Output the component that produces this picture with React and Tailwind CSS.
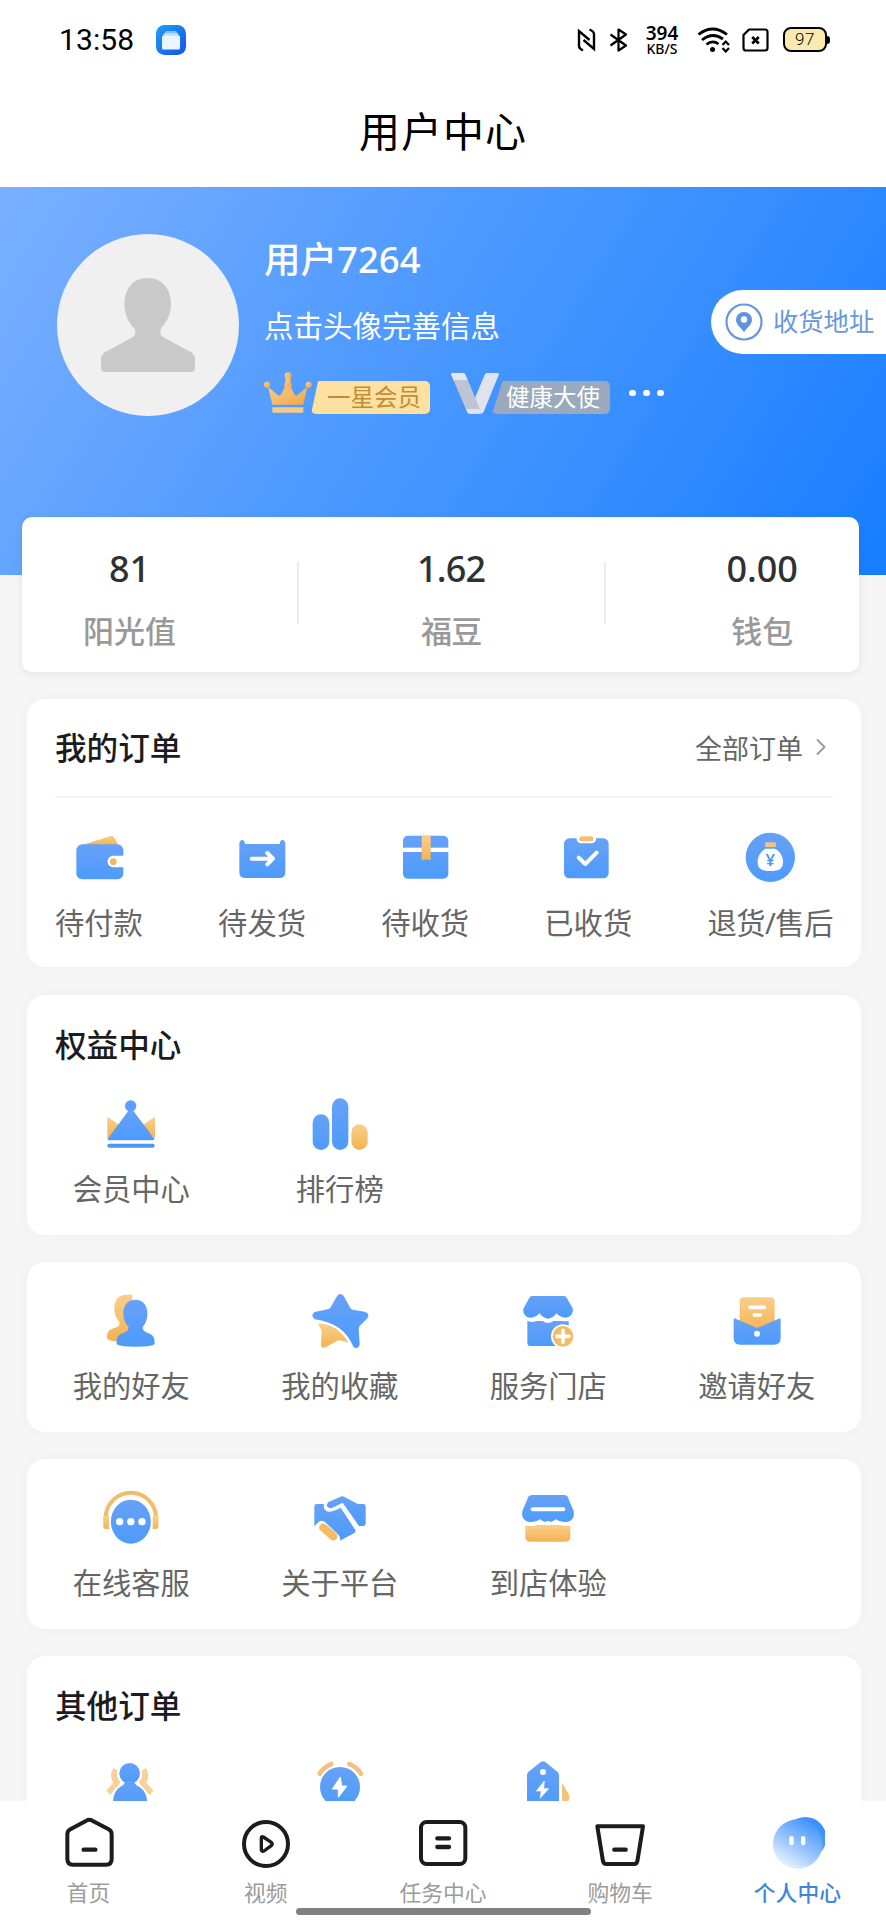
import React from 'react';
import { ChevronRight } from 'lucide-react';

const BLUE = 'url(#blue)';
const ORANGE = 'url(#orange)';

// Shared gradients for all the menu icons
const IconDefs = () => (
  <svg className="absolute w-0 h-0">
    <defs>
      <linearGradient id="blue" x1="0" y1="0" x2="0" y2="1">
        <stop offset="0" stopColor="#66a1f8" />
        <stop offset="1" stopColor="#4d9bfb" />
      </linearGradient>
      <linearGradient id="orange" x1="0" y1="0" x2="0" y2="1">
        <stop offset="0" stopColor="#f9cf8a" />
        <stop offset="1" stopColor="#f5b252" />
      </linearGradient>
      <linearGradient id="crown" x1="0" y1="0" x2="1" y2="1">
        <stop offset="0" stopColor="#fbd08a" />
        <stop offset="1" stopColor="#f3a648" />
      </linearGradient>
      <linearGradient id="appicon" x1="0" y1="0" x2="1" y2="1">
        <stop offset="0" stopColor="#1ea0f4" />
        <stop offset="1" stopColor="#1353e8" />
      </linearGradient>
      <linearGradient id="faceBack" x1="0" y1="1" x2="1" y2="0">
        <stop offset="0" stopColor="#9cc6ff" />
        <stop offset="1" stopColor="#2282fa" />
      </linearGradient>
      <linearGradient id="faceFront" x1="0.2" y1="1" x2="0.75" y2="0.1">
        <stop offset="0" stopColor="#f4f9ff" />
        <stop offset="0.45" stopColor="#a3cbff" />
        <stop offset="1" stopColor="#4a99fc" />
      </linearGradient>
    </defs>
  </svg>
);

const MenuIcon = ({ children }) => (
  <svg className="w-16 h-16" viewBox="0 0 192 192" fill="none">
    {children}
  </svg>
);

const icons = {
  wallet: (
    <MenuIcon>
      <path d="M46 57 L131 30 Q137 28 140 33 L154 57Z" fill={ORANGE} />
      <rect x="28" y="55" width="141" height="105" rx="18" fill={BLUE} />
      <path d="M176 89H139a17.500 17.500 0 0 0 0 35H176Z" fill="#fff" />
      <circle cx="139" cy="107" r="10" fill="#f0b766" />
    </MenuIcon>
  ),
  ship: (
    <MenuIcon>
      <path d="M28 54Q28 43 37 42Q44 43 45 54H149Q150 43 157 42Q166 43 166 54V138Q166 156 148 156H46Q28 156 28 138Z" fill={BLUE} />
      <path d="M65 98H128M112 81L129 98L112 115" stroke="#fff" strokeWidth="12" strokeLinecap="round" strokeLinejoin="round" />
    </MenuIcon>
  ),
  parcel: (
    <MenuIcon>
      <rect x="30" y="29" width="136" height="129" rx="15" fill={BLUE} />
      <rect x="28" y="65" width="140" height="13" fill="#fff" />
      <path d="M86 29H113V103L99.500 100L86 103Z" fill={ORANGE} />
    </MenuIcon>
  ),
  received: (
    <MenuIcon>
      <rect x="24" y="37" width="134" height="120" rx="16" fill={BLUE} />
      <path d="M62 34H120V40Q118 52 106 52H76Q64 52 62 40Z" fill="#fff" />
      <rect x="70" y="31" width="42" height="15" rx="6" fill="#f2c071" />
      <path d="M68 95L88 114L122 80" stroke="#fff" strokeWidth="12" strokeLinecap="round" strokeLinejoin="round" />
    </MenuIcon>
  ),
  refund: (
    <MenuIcon>
      <circle cx="97" cy="94" r="74" fill={BLUE} />
      <rect x="81" y="49" width="33" height="14" rx="4" fill="#f0c287" />
      <path d="M83 68H111C127 76 135 92 135 107C135 127 124 135 97 135C70 135 59 127 59 107C59 92 67 76 83 68Z" fill="#fff" />
      <text x="97" y="121" textAnchor="middle" fontSize="50" fontWeight="600" fill="#4d97f7">¥</text>
    </MenuIcon>
  ),
  crown: (
    <MenuIcon>
      <path d="M25 74L62 100L25 140ZM168 74L130 100L168 140Z" fill={ORANGE} />
      <circle cx="95" cy="42" r="17" fill="#5c9ff8" />
      <path d="M90 54H101L166 140Q166 145 160 145H30Q25 145 26 140Z" fill={BLUE} />
      <rect x="25" y="155" width="142" height="12" rx="6" fill="#4d97f3" />
    </MenuIcon>
  ),
  rank: (
    <MenuIcon>
      <rect x="14" y="67" width="50" height="107" rx="25" fill={BLUE} />
      <rect x="72" y="19" width="49" height="155" rx="24.500" fill={BLUE} />
      <rect x="130" y="97" width="49" height="77" rx="24.500" fill={ORANGE} />
    </MenuIcon>
  ),
  friends: (
    <MenuIcon>
      <path d="M81 17C59 17 46 33 46 57C46 78 53 90 61 99C64 109 58 114 46 117C30 121 24 128 24 148Q26 157 60 157H100V17Z" fill={ORANGE} />
      <path d="M109 32C87 32 73 48 73 72C73 92 79 103 88 112C90 122 86 127 75 131C58 136 52 142 53 165Q58 173 110 173Q162 173 167 165C168 142 160 136 145 131C133 127 130 122 132 112C140 103 145 92 145 72C145 48 131 32 109 32Z" fill={BLUE} />
    </MenuIcon>
  ),
  star: (
    <MenuIcon>
      <path d="M97 15Q104 15 109 24L127 57Q129 61 134 62L170 68Q187 73 178 88L155 111Q152 115 152 120L155 165Q152 182 137 175Q108 102 20 91Q6 79 20 69L59 61Q65 60 67 56L86 23Q90 15 97 15Z" fill={BLUE} />
      <path d="M30 103Q91 106 121 162Q96 151 88 155L54 174Q38 181 39 164L41 127Q41 121 36 116Z" fill={ORANGE} />
    </MenuIcon>
  ),
  store: (
    <MenuIcon>
      <path d="M34 96H158V171H44Q34 171 34 161Z" fill={BLUE} />
      <path d="M30 84V94Q46 102 60 97Q66 94 72 88Q80 101 96 102Q112 101 121 88Q129 101 162 95V84Z" fill="#fff" />
      <path d="M48 21H144Q149 21 152 26L170 58Q173 67 165 79Q155 89 140 85Q130 83 121 73Q112 88 96 89Q80 88 71 73Q62 83 52 85Q34 89 26 77Q19 67 23 58L40 26Q43 21 48 21Z" fill={BLUE} />
      <circle cx="141" cy="142" r="36" fill="#fff" />
      <circle cx="141" cy="142" r="31" fill="#f1bb67" />
      <path d="M141 124V160M123 142H159" stroke="#fff" strokeWidth="11" strokeLinecap="round" />
    </MenuIcon>
  ),
  invite: (
    <MenuIcon>
      <rect x="44" y="25" width="105" height="105" rx="12" fill={ORANGE} />
      <path d="M75 55H118M88 78H106" stroke="#fff" strokeWidth="11" strokeLinecap="round" />
      <path d="M26 92Q26 86 32 89L90 115Q96 118 102 115L161 89Q167 86 167 92V147Q167 167 147 167H46Q26 167 26 147Z" fill={BLUE} />
      <circle cx="96" cy="134" r="9" fill="#fff" />
    </MenuIcon>
  ),
  service: (
    <MenuIcon>
      <path d="M20 105V96A75 75 0 0 1 171 96V105" stroke="#efbd6c" strokeWidth="12" />
      <path d="M12 90H30V129H20Q12 129 13 121ZM179 90H161V129H171Q179 129 178 121Z" fill={ORANGE} />
      <ellipse cx="95.500" cy="107" rx="64" ry="71" fill="#fff" />
      <ellipse cx="95.500" cy="107" rx="60" ry="66" fill={BLUE} />
      <circle cx="62" cy="107" r="11" fill="#fff" />
      <circle cx="95.500" cy="107" r="11" fill="#fff" />
      <circle cx="129" cy="107" r="11" fill="#fff" />
    </MenuIcon>
  ),
  handshake: (
    <MenuIcon>
      <path d="M60 49L96 33Q103 29 110 33L145 52Q149 54 153 54H166Q173 54 173 61V113Q173 120 166 120H153L104 50L72 66Q58 68 56 57Z" fill={BLUE} />
      <path d="M19 61Q19 54 26 54H48Q44 72 61 77Q74 78 98 65L142 132Q144 138 139 141L96 164Q99 151 88 143L54 111Q41 99 31 109L19 121Z" fill={BLUE} />
      <path d="M46 125L76 151" stroke="#f5ba65" strokeWidth="25" strokeLinecap="round" />
    </MenuIcon>
  ),
  shop: (
    <MenuIcon>
      <path d="M28 117H163V153Q163 167 149 167H42Q28 167 28 153Z" fill={ORANGE} />
      <path d="M28 112V119Q44 121 58 119Q68 116 74 111Q84 121 96 115Q108 121 119 111Q130 121 163 119V112Z" fill="#fff" />
      <path d="M48 27H146Q152 27 155 32L172 73Q176 85 172 94Q166 108 148 108Q131 109 119 100Q108 112 96 104Q84 112 73 100Q60 109 44 108Q26 108 20 94Q16 85 20 73L37 32Q41 27 48 27Z" fill={BLUE} />
      <path d="M50 70H142" stroke="#fff" strokeWidth="12" strokeLinecap="round" />
    </MenuIcon>
  ),
  group: (
    <MenuIcon>
      <path d="M51 50Q38 70 54 87Q46 102 28 119M133 50Q146 70 130 87Q138 102 158 119" stroke="#f8d09a" strokeWidth="18" />
      <circle cx="92" cy="61" r="37" fill="#fff" />
      <path d="M34 150Q36 94 92 88Q148 94 152 150Z" fill="#fff" />
      <circle cx="92" cy="61" r="31" fill={BLUE} />
      <path d="M78 84H106Q106 94 118 100Q144 114 145 150V170H42V150Q42 114 66 100Q78 94 78 84Z" fill={BLUE} />
    </MenuIcon>
  ),
  flash: (
    <MenuIcon>
      <path d="M35 62Q48 42 70 33M159 62Q146 42 124 33" stroke="#f2c27c" strokeWidth="14" strokeLinecap="round" />
      <circle cx="96" cy="102" r="66" fill="#fff" />
      <circle cx="96" cy="102" r="60" fill={BLUE} />
      <path d="M46 150L58 134H134L148 150Z" fill="#4d9bfb" />
      <path d="M97 72L73 108H91V133L117 99H101Z" fill="#fff" stroke="#fff" strokeWidth="3" strokeLinejoin="round" />
    </MenuIcon>
  ),
  tag: (
    <MenuIcon>
      <path d="M138 90L158 122Q164 136 155 147V170H138Z" fill="#f4c27a" />
      <path d="M33 66Q33 60 38 56L74 27Q81 22 88 27L124 56Q129 60 129 66V170H33Z" fill={BLUE} />
      <circle cx="81" cy="57" r="9" fill="#fff" />
      <path d="M85 84L61 114H76L72 136L98 107H83Z" fill="#fff" stroke="#fff" strokeWidth="2" strokeLinejoin="round" />
    </MenuIcon>
  ),
};

const NavIcon = ({ children }) => (
  <svg
    className="w-14 h-14"
    viewBox="0 0 168 168"
    fill="none"
    stroke="#1c1c1c"
    strokeWidth="12"
    strokeLinecap="round"
    strokeLinejoin="round"
  >
    {children}
  </svg>
);

const tabs = [
  {
    label: '首页',
    icon: (
      <NavIcon>
        <path d="M76 17Q85 11 94 17L143 43Q152 48 152 58V132Q152 149 135 149H36Q19 149 19 132V58Q19 48 28 43Z" />
        <path d="M68 104H103" strokeWidth="13" />
      </NavIcon>
    ),
  },
  {
    label: '视频',
    icon: (
      <NavIcon>
        <circle cx="84" cy="87" r="66" />
        <path d="M70 69Q70 63 76 66L100 82Q105 87 100 92L78 108Q71 111 70 105Z" strokeWidth="10" />
      </NavIcon>
    ),
  },
  {
    label: '任务中心',
    icon: (
      <NavIcon>
        <rect x="18" y="21" width="133" height="126" rx="17" />
        <path d="M67 70H102M67 96H102" strokeWidth="13" />
      </NavIcon>
    ),
  },
  {
    label: '购物车',
    icon: (
      <NavIcon>
        <path d="M16 34H153L136 139Q134 147 127 147H43Q35 147 33 139Z" />
        <path d="M67 104H101" strokeWidth="13" />
      </NavIcon>
    ),
  },
  {
    label: '个人中心',
    active: true,
    icon: (
      <svg className="w-14 h-14" viewBox="0 0 168 168">
        <circle cx="109" cy="69" r="63" fill="url(#faceBack)" />
        <circle cx="86" cy="87" r="74" fill="url(#faceFront)" />
        <rect x="61" y="63" width="13" height="28" rx="6" fill="#fff" />
        <rect x="96" y="63" width="13" height="28" rx="6" fill="#fff" />
      </svg>
    ),
  },
];

const orderItems = [
  { label: '待付款', icon: icons.wallet },
  { label: '待发货', icon: icons.ship },
  { label: '待收货', icon: icons.parcel },
  { label: '已收货', icon: icons.received },
  { label: '退货/售后', icon: icons.refund, labelClass: 'tracking-[-0.5px]' },
];

const StatusBar = () => (
  <div className="h-[79px] pl-[59px] pr-14 flex items-center justify-between text-black">
    <div className="flex items-center gap-[22px]">
      <span className="font-['Roboto',sans-serif] text-[30px] leading-none tracking-[0.1px]">13:58</span>
      <svg className="w-[30px] h-[30px]" viewBox="0 0 30 30">
        <rect width="30" height="30" rx="8.500" fill="url(#appicon)" />
        <rect x="9" y="6" width="12" height="3" rx="1.500" fill="#7fc0fa" />
        <rect x="7.500" y="8" width="15" height="4" rx="1.500" fill="#b8dcfd" />
        <rect x="6" y="10.500" width="18" height="14" rx="1.500" fill="#eaf5ff" />
      </svg>
    </div>
    <div className="flex items-center">
      <svg className="w-[19px] h-6" viewBox="0 0 19 24" fill="none" stroke="#000" strokeWidth="2.400">
        <path d="M6 22.500Q2 20.500 2 18V3L12.500 12M12.500 1.500Q17 3.500 17 6V21L6.500 12" />
      </svg>
      <svg className="w-[19px] h-6 ml-[13.500px]" viewBox="0 0 19 24" fill="none" stroke="#000" strokeWidth="2.200">
        <path d="M1.500 6.500L17 17.500L9.500 22.500V1.500L17 6.500L1.500 17.500" strokeLinejoin="round" />
      </svg>
      <div className="ml-4 w-9 flex flex-col items-center font-['Noto_Sans',sans-serif]">
        <span className="text-[19px] leading-[18px] font-semibold">394</span>
        <span className="text-[14px] leading-[14px] font-medium">KB/S</span>
      </div>
      <svg className="w-[33px] h-[26px] ml-[17px]" viewBox="0 0 33 26" fill="none" stroke="#000" strokeWidth="2.800">
        <path d="M1.500 7.500Q15.500 -3.500 30 7.500M5 13Q15.500 4.500 26 12M9.500 17.500Q15.500 12.500 21.500 17" />
        <circle cx="15.500" cy="22.500" r="2.500" fill="#000" stroke="none" />
        <path d="M25.500 18L28.700 14.500L32 18M25.500 21L28.700 24.500L32 21" strokeWidth="2.200" />
      </svg>
      <svg className="w-[27px] h-6 ml-3" viewBox="0 0 27 24" fill="none" stroke="#000" strokeWidth="2.200">
        <path d="M7 1.500H23Q25.500 1.500 25.500 4V20Q25.500 22.500 23 22.500H4Q1.500 22.500 1.500 20V7Z" strokeLinejoin="round" />
        <path d="M10.200 9L16.800 15.500M16.800 9L10.200 15.500" strokeWidth="2.600" />
      </svg>
      <div className="ml-3.5 flex items-center">
        <div className="w-11 h-[25px] rounded-[8px] border-2 border-black bg-[#fbeab0] flex items-center justify-center font-['Roboto',sans-serif] font-light text-[17px] leading-none tracking-[0.5px]">
          97
        </div>
        <div className="w-[3px] h-2 rounded-r bg-black" />
      </div>
    </div>
  </div>
);

const ProfileHeader = () => (
  <div className="h-[388px] pt-[47px] pl-[57px] flex bg-[linear-gradient(122deg,#7ab0ff_0%,#4f9aff_42%,#3a90ff_65%,#177dff_100%)]">
    <div className="w-[182px] h-[182px] shrink-0 rounded-full bg-[#f0f0f0]">
      <svg className="w-full h-full" viewBox="0 0 182 182">
        <path
          d="M90.500 44C76 44 67.500 55 67.500 70C67.500 80 71 88 77 94C79 98 79 101 76 103L52 116Q44 119 44 125V134Q44 138 48 138H134Q138 138 138 134V125Q138 119 130 116L106 103Q102 101 104 94C110 88 114 80 114 70C114 55 105 44 90.500 44Z"
          fill="#c9c9c9"
        />
      </svg>
    </div>
    <div className="ml-[25px] flex-1 text-white">
      <h2 className="mt-[5px] text-[36.500px] leading-[40px] font-medium">用户7264</h2>
      <p className="mt-[31px] text-[29.500px] leading-[32px]">点击头像完善信息</p>
      <div className="mt-[28px] h-11 flex items-end">
        <svg className="w-12 h-[42px]" viewBox="0 0 144 126" fill="url(#crown)">
          <path d="M72 30L92 68Q96 72 100 70L130 44L118 98H25L12 44L42 70Q47 72 51 67Z" />
          <circle cx="72" cy="11" r="10" />
          <path d="M66 16H78L84 46H60Z" />
          <circle cx="9" cy="38" r="9" />
          <circle cx="134" cy="38" r="9" />
          <path d="M25 106H118V119Q118 122 114 122H29Q25 122 25 119Z" fill="#f6cb86" />
        </svg>
        <div className="-ml-px h-[33px] w-[119px] pl-4 text-[23.500px] leading-[33px] text-[#c08c3c] rounded-[5px] bg-[#fde1a0] [clip-path:polygon(6%_0,100%_0,100%_100%,0_100%)]">
          一星会员
        </div>
        <svg className="w-12 h-[41px] ml-[21px]" viewBox="0 0 144 123">
          <path d="M3 0H36Q41 0 43 5L66 60L54 122Q50 120 48 115L1 5Q0 1 3 0Z" fill="#c5cbdc" />
          <path d="M3 0H36Q41 0 43 5L50 22H8L1 5Q0 1 3 0Z" fill="#e4e7f2" />
          <path d="M108 0H140Q145 1 143 6L98 116Q95 122 90 122H56Q51 121 49 117L72 75L101 5Q103 0 108 0Z" fill="#dfe2ef" />
          <path d="M50 22L74 78L92 120Q91 122 88 122H56Q50 121 48 115L8 22Z" fill="#bcc4d6" />
          <path d="M46 108H95L91 118Q89 122 86 122H56Q50 121 48 115Z" fill="#dfe2ef" />
        </svg>
        <div className="-ml-[7px] h-[33px] w-[118px] pl-3.5 text-[23.500px] leading-[33px] rounded-[5px] bg-[#9aa9bd] [clip-path:polygon(9%_0,100%_0,100%_100%,0_100%)]">
          健康大使
        </div>
        <div className="ml-[19px] mb-[18px] flex gap-[7px]">
          <span className="w-[7px] h-[6px] rounded-full bg-white" />
          <span className="w-[7px] h-[6px] rounded-full bg-white" />
          <span className="w-[7px] h-[6px] rounded-full bg-white" />
        </div>
      </div>
    </div>
    {/* Address button stuck to the right edge */}
    <div className="mt-14 w-[175px] h-16 shrink-0 pl-3.5 flex items-center rounded-l-full bg-white text-[#6797dc]">
      <svg className="w-[38px] h-[38px]" viewBox="0 0 38 38" fill="none">
        <circle cx="19" cy="19" r="17.500" stroke="#6797dc" strokeWidth="2.200" />
        <path d="M19 29C15 24 11 21 11 17A8 8 0 0 1 27 17C27 21 23 24 19 29Z" fill="#5f93dd" />
        <circle cx="19" cy="16.500" r="3.200" fill="#fff" />
      </svg>
      <span className="ml-2.5 text-[25.300px] leading-none whitespace-nowrap">收货地址</span>
    </div>
  </div>
);

const Stat = ({ value, label, className = '' }) => (
  <div className={`flex flex-col items-center font-medium ${className}`}>
    <span className="text-[36px] leading-[40px] text-[#303133]">{value}</span>
    <span className="mt-6 text-[31px] leading-[36px] text-[#999] whitespace-nowrap">{label}</span>
  </div>
);

const StatDivider = () => <div className="w-0.5 h-[62px] mt-[13px] bg-[#ececee]" />;

const Card = ({ title, className = '', children }) => (
  <div className={`ml-[27px] mr-[25px] rounded-[18px] bg-white shadow-[0_0_12px_rgba(0,0,0,0.025)] ${className}`}>
    {title && <h3 className="ml-7 pt-[30px] text-[31.600px] leading-[40px] font-medium text-[#1c1c1e]">{title}</h3>}
    {children}
  </div>
);

const MenuItem = ({ icon, label, labelClass = '' }) => (
  <div className="flex flex-col items-center">
    {icon}
    <span className={`mt-[15px] text-[29.300px] leading-[36px] text-[#666] whitespace-nowrap ${labelClass}`}>{label}</span>
  </div>
);

const App = () => {
  return (
    <div className="w-[886px] h-[1920px] flex flex-col overflow-hidden bg-white font-['Noto_Sans','Noto_Sans_CJK_SC',sans-serif]">
      <IconDefs />
      <StatusBar />
      <div className="h-[108px] shrink-0 flex justify-center text-black">
        <h1 className="mt-7 text-[41px] leading-[48px] tracking-[1px] font-normal">用户中心</h1>
      </div>

      <div className="flex-1 min-h-0 overflow-hidden bg-[#f5f5f6]">
        <ProfileHeader />

        <div className="relative -mt-[58px] ml-[22px] mr-[27px] h-[155px] px-[61px] pt-8 flex justify-between items-start rounded-[10px] bg-white shadow-[0_2px_8px_rgba(0,0,0,0.07)]">
          <Stat value="81" label="阳光值" />
          <StatDivider />
          <Stat value="1.62" label="福豆" className="w-[63px] tracking-[-0.8px]" />
          <StatDivider />
          <Stat value="0.00" label="钱包" />
        </div>

        <Card className="mt-[27px] h-[268px]">
          <div className="mx-7 h-[99px] pt-px flex items-center justify-between border-b-2 border-[#f5f5f6]">
            <h3 className="text-[31.600px] leading-[40px] font-medium text-[#1c1c1e]">我的订单</h3>
            <div className="mt-0.5 flex items-center text-[#666]">
              <span className="text-[27px] leading-[36px]">全部订单</span>
              <ChevronRight className="w-7 h-7 ml-1 -mr-0.5 -mt-1 text-[#999]" strokeWidth={1.6} />
            </div>
          </div>
          <div className="mx-7 mt-7 flex justify-between">
            {orderItems.map((item) => (
              <MenuItem key={item.label} {...item} />
            ))}
          </div>
        </Card>

        <Card title="权益中心" className="mt-7 h-[240px]">
          <div className="mt-[27px] grid grid-cols-4">
            <MenuItem icon={icons.crown} label="会员中心" />
            <MenuItem icon={icons.rank} label="排行榜" />
          </div>
        </Card>

        <Card className="mt-[27px] h-[170px] pt-[27px]">
          <div className="grid grid-cols-4">
            <MenuItem icon={icons.friends} label="我的好友" />
            <MenuItem icon={icons.star} label="我的收藏" />
            <MenuItem icon={icons.store} label="服务门店" />
            <MenuItem icon={icons.invite} label="邀请好友" />
          </div>
        </Card>

        <Card className="mt-[27px] h-[170px] pt-[27px]">
          <div className="grid grid-cols-4">
            <MenuItem icon={icons.service} label="在线客服" />
            <MenuItem icon={icons.handshake} label="关于平台" />
            <MenuItem icon={icons.shop} label="到店体验" />
          </div>
        </Card>

        <Card title="其他订单" className="mt-[27px] h-[240px]">
          <div className="mt-[27px] grid grid-cols-4">
            <div className="flex justify-center">{icons.group}</div>
            <div className="flex justify-center">{icons.flash}</div>
            <div className="flex justify-center">{icons.tag}</div>
          </div>
        </Card>
      </div>

      {/* Bottom navigation */}
      <div className="relative h-[119px] shrink-0 pt-3.5 grid grid-cols-5 bg-white">
        {tabs.map((tab) => (
          <div key={tab.label} className="flex flex-col items-center">
            {tab.icon}
            <span
              className={`mt-2.5 text-[21.800px] leading-6 ${tab.active ? 'text-[#3f86dc] font-medium' : 'text-[#9b9b9b]'}`}
            >
              {tab.label}
            </span>
          </div>
        ))}
        <div className="absolute left-[296px] bottom-[5px] w-[295px] h-[7px] rounded-full bg-[#808080]" />
      </div>
    </div>
  );
};

export default App;
